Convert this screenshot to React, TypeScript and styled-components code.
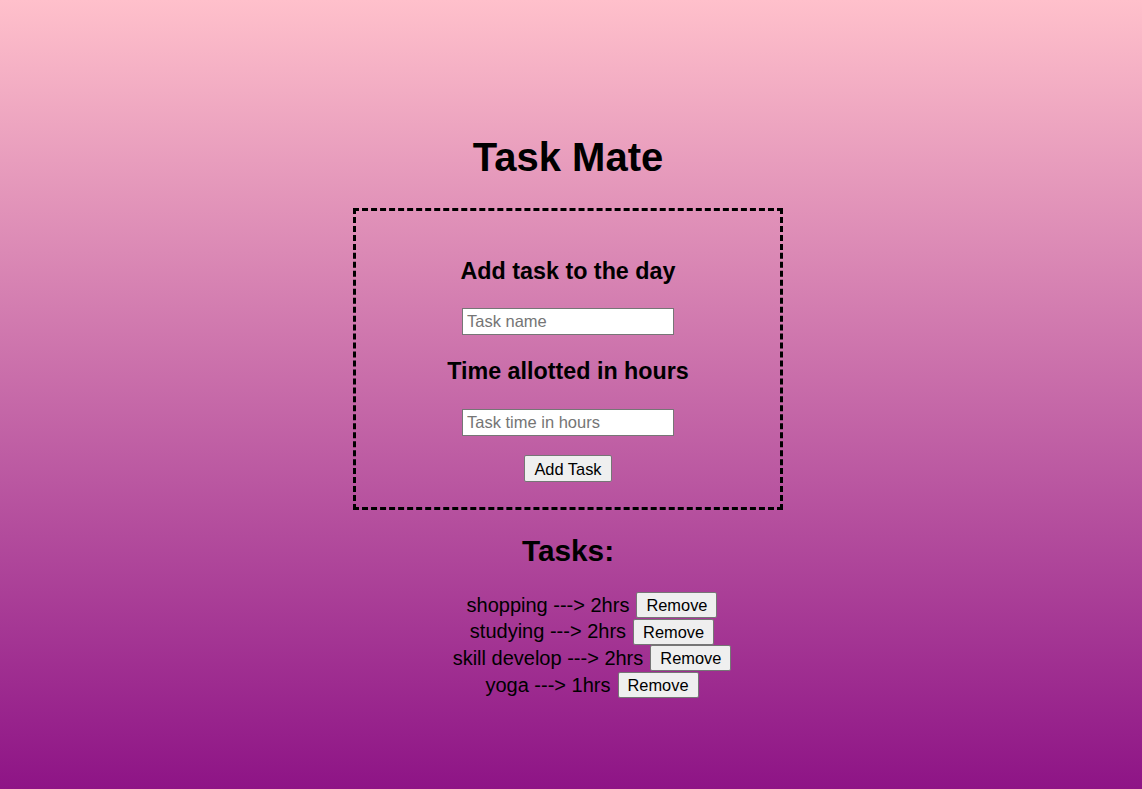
import React from 'react';
import styled, { createGlobalStyle } from 'styled-components';

const GlobalStyle = createGlobalStyle`
  html, body {
    margin: 0;
    padding: 0;
  }

  body {
    font-family: "Liberation Sans", Arial, sans-serif;
    color: #000;
  }
`;

const StyledPage = styled.div`
  display: flex;
  flex-direction: column;
  align-items: center;
  min-height: 100vh;
  box-sizing: border-box;
  padding: 134px 6px 0 0;
  background: linear-gradient(to bottom, #ffc0cb, #8e1486);
`;

const StyledTitle = styled.h1`
  margin: 0 0 28px;
  font-size: 40px;
  line-height: 46px;
  font-weight: bold;
`;

const StyledForm = styled.div`
  display: flex;
  flex-direction: column;
  align-items: center;
  width: 430px;
  height: 302px;
  box-sizing: border-box;
  padding-top: 47px;
  border: 3px dashed #000;
`;

const StyledLabel = styled.h3`
  margin: 0;
  font-size: 23.3px;
  line-height: 26px;
  font-weight: bold;
`;

const StyledInput = styled.input`
  width: 212px;
  height: 27px;
  box-sizing: border-box;
  margin: ${({ $top }) => `${$top}px`} 0 0;
  padding: 2px 4px;
  border: 1px solid #767676;
  border-radius: 0;
  background: #fff;
  font-family: "Liberation Sans", Arial, sans-serif;
  font-size: 16.5px;

  &::placeholder {
    color: #757575;
  }
`;

const StyledButton = styled.button`
  height: ${({ $height }) => `${$height}px`};
  box-sizing: border-box;
  padding: 0 9px;
  border: 1px solid #767676;
  border-radius: 2px;
  background: #efefef;
  color: #000;
  font-family: "Liberation Sans", Arial, sans-serif;
  font-size: 16.4px;
  line-height: 18px;
  cursor: pointer;
`;

const StyledAddButton = styled(StyledButton)`
  margin-top: 19px;
`;

const StyledSpacer = styled.div`
  height: ${({ $height }) => `${$height}px`};
`;

const StyledTasksTitle = styled.h2`
  margin: 24px 0 24px;
  font-size: 29.8px;
  line-height: 34px;
  font-weight: bold;
`;

const StyledTaskList = styled.ul`
  display: flex;
  flex-direction: column;
  align-items: center;
  margin: 0;
  padding: 0 0 0 48px;
  list-style: none;
`;

const StyledTaskRow = styled.li`
  display: flex;
  align-items: center;
  gap: 7px;
  height: 26.6px;
  font-size: 20px;
`;

const tasks = [
  { id: 1, name: 'shopping', hours: 2 },
  { id: 2, name: 'studying', hours: 2 },
  { id: 3, name: 'skill develop', hours: 2 },
  { id: 4, name: 'yoga', hours: 1 },
];

function App() {
  return (
    <>
      <GlobalStyle />
      <StyledPage>
        <StyledTitle>Task Mate</StyledTitle>

        <StyledForm>
          <StyledLabel>Add task to the day</StyledLabel>
          <StyledInput $top={24} type="text" placeholder="Task name" />
          <StyledSpacer $height={23} />
          <StyledLabel>Time allotted in hours</StyledLabel>
          <StyledInput $top={25} type="text" placeholder="Task time in hours" />
          <StyledAddButton $height={27}>Add Task</StyledAddButton>
        </StyledForm>

        <StyledTasksTitle>Tasks:</StyledTasksTitle>

        <StyledTaskList>
          {tasks.map((task) => (
            <StyledTaskRow key={task.id}>
              <span>{task.name} ---&gt; {task.hours}hrs</span>
              <StyledButton $height={26}>Remove</StyledButton>
            </StyledTaskRow>
          ))}
        </StyledTaskList>
      </StyledPage>
    </>
  );
}

export default App;
